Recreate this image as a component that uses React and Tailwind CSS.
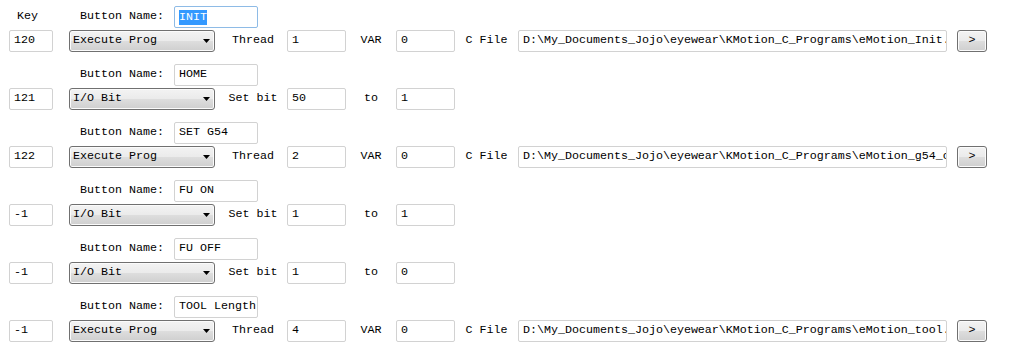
import React from 'react';

const PATH = 'D:\\My_Documents_Jojo\\eyewear\\KMotion_C_Programs\\';

const rows = [
  { key: '120', name: 'INIT', focused: true, action: 'Execute Prog', a: '1', b: '0', file: PATH + 'eMotion_Init.c' },
  { key: '121', name: 'HOME', action: 'I/O Bit', a: '50', b: '1' },
  { key: '122', name: 'SET G54', action: 'Execute Prog', a: '2', b: '0', file: PATH + 'eMotion_g54_coord.c' },
  { key: '-1', name: 'FU ON', action: 'I/O Bit', a: '1', b: '1' },
  { key: '-1', name: 'FU OFF', action: 'I/O Bit', a: '1', b: '0' },
  { key: '-1', name: 'TOOL Length', action: 'Execute Prog', a: '4', b: '0', file: PATH + 'eMotion_tool.c' },
];

function Field({ width, children, focused = false }) {
  return (
    <div
      className={`${width} h-[22px] shrink-0 flex items-center overflow-hidden whitespace-nowrap bg-white rounded-[2px] border pl-[4px] ${
        focused ? 'border-[#8ebbe6]' : 'border-[#d2d2d2]'
      }`}
    >
      {children}
    </div>
  );
}

function Combo({ label }) {
  return (
    <div className="ml-[16px] w-[146px] h-[22px] shrink-0 flex items-center justify-between pl-[3px] pr-[4px] rounded-[3px] border border-[#707070] bg-[linear-gradient(#f3f3f3_0%,#ebebeb_48%,#dddddd_52%,#cfcfcf_100%)] shadow-[inset_0_0_0_1px_#fbfbfb]">
      <span>{label}</span>
      <svg width="7" height="4" viewBox="0 0 7 4">
        <path d="M0 0h7L3.5 4z" fill="#000" />
      </svg>
    </div>
  );
}

function Group({ row, first }) {
  const prog = row.action === 'Execute Prog';
  return (
    <div className="flex flex-col gap-[2px] mb-[12px]">
      <div className="flex items-center h-[22px]">
        {first ? (
          <span className="ml-[17px] w-[63px] shrink-0">Key</span>
        ) : (
          <span className="w-[80px] shrink-0" />
        )}
        <span className="w-[94px] shrink-0">Button Name:</span>
        <Field width="w-[84px]" focused={row.focused}>
          {row.focused ? (
            <span className="bg-[#3399ff] text-white leading-[15px]">{row.name}</span>
          ) : (
            row.name
          )}
        </Field>
      </div>
      {row.key !== undefined && (
        <div className="flex items-center h-[22px]">
          <div className="ml-[9px]">
            <Field width="w-[44px]">{row.key}</Field>
          </div>
          <Combo label={row.action} />
          <span className="ml-[4px] w-[68px] shrink-0 text-center">{prog ? 'Thread' : 'Set bit'}</span>
          <Field width="w-[59px]">{row.a}</Field>
          <span className="w-[50px] shrink-0 text-center">{prog ? 'VAR' : 'to'}</span>
          <Field width="w-[59px]">{row.b}</Field>
          {prog && (
            <>
              <span className="w-[63px] shrink-0 text-center">C File</span>
              <Field width="w-[429px]">{row.file}</Field>
              <button
                type="button"
                className="ml-[10px] w-[30px] h-[22px] shrink-0 rounded-[3px] border border-[#707070] bg-[linear-gradient(#f3f3f3_0%,#ebebeb_48%,#dddddd_52%,#cfcfcf_100%)] shadow-[inset_0_0_0_1px_#fbfbfb] leading-none"
              >
                &gt;
              </button>
            </>
          )}
        </div>
      )}
    </div>
  );
}

export default function App() {
  return (
    <div className="w-[1022px] h-[354px] overflow-hidden bg-white pt-[6px] text-[11.67px] text-black font-['Liberation_Mono','Courier_New',monospace]">
      {rows.map((row, i) => (
        <Group key={i} row={row} first={i === 0} />
      ))}
      <Group row={{ name: '' }} />
    </div>
  );
}
